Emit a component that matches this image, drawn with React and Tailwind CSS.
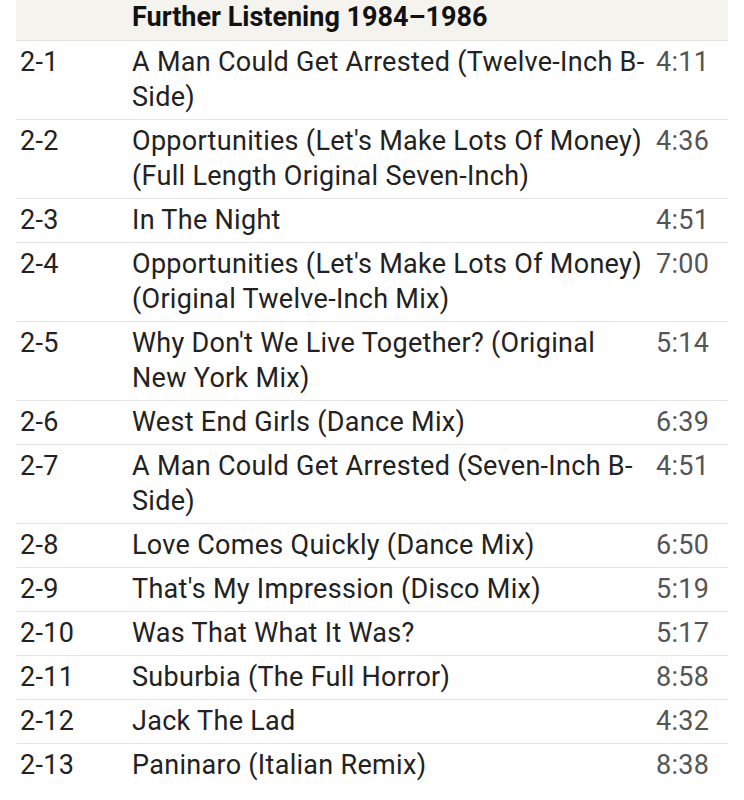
import React from "react";

const tracks = [
  ["2-1", "A Man Could Get Arrested (Twelve-Inch B-Side)", "4:11"],
  ["2-2", "Opportunities (Let's Make Lots Of Money) (Full Length Original Seven-Inch)", "4:36"],
  ["2-3", "In The Night", "4:51"],
  ["2-4", "Opportunities (Let's Make Lots Of Money) (Original Twelve-Inch Mix)", "7:00"],
  ["2-5", "Why Don't We Live Together? (Original New York Mix)", "5:14"],
  ["2-6", "West End Girls (Dance Mix)", "6:39"],
  ["2-7", "A Man Could Get Arrested (Seven-Inch B-Side)", "4:51"],
  ["2-8", "Love Comes Quickly (Dance Mix)", "6:50"],
  ["2-9", "That's My Impression (Disco Mix)", "5:19"],
  ["2-10", "Was That What It Was?", "5:17"],
  ["2-11", "Suburbia (The Full Horror)", "8:58"],
  ["2-12", "Jack The Lad", "4:32"],
  ["2-13", "Paninaro (Italian Remix)", "8:38"],
];

export default function App() {
  return (
    <div className="w-[744px] h-[800px] bg-white overflow-hidden" style={{ fontFamily: "Roboto, sans-serif" }}>
      <table className="ml-[16px] w-[712px] border-collapse table-fixed">
        <colgroup>
          <col className="w-[112px]" />
          <col className="w-[524px]" />
          <col className="w-[76px]" />
        </colgroup>
        <thead>
          <tr className="bg-[#f4f3ee] border-b border-[#e2e2e2]">
            <th className="p-0"></th>
            <th className="text-left font-bold text-[27px] leading-[35px] text-[#111] px-[4px] pt-0 pb-[5px]" colSpan={2}>
              Further Listening 1984–1986
            </th>
          </tr>
        </thead>
        <tbody>
          {tracks.map(([pos, title, dur]) => (
            <tr key={pos} className="border-b border-[#e4e4e4] last:border-b-0 align-top text-[27px] leading-[35px] tracking-[0.3px]">
              <td className="px-[4px] py-[4px] text-[#222]">{pos}</td>
              <td className="px-[4px] py-[4px] text-[#222]">{title}</td>
              <td className="px-[4px] py-[4px] text-[#555]">{dur}</td>
            </tr>
          ))}
        </tbody>
      </table>
    </div>
  );
}
